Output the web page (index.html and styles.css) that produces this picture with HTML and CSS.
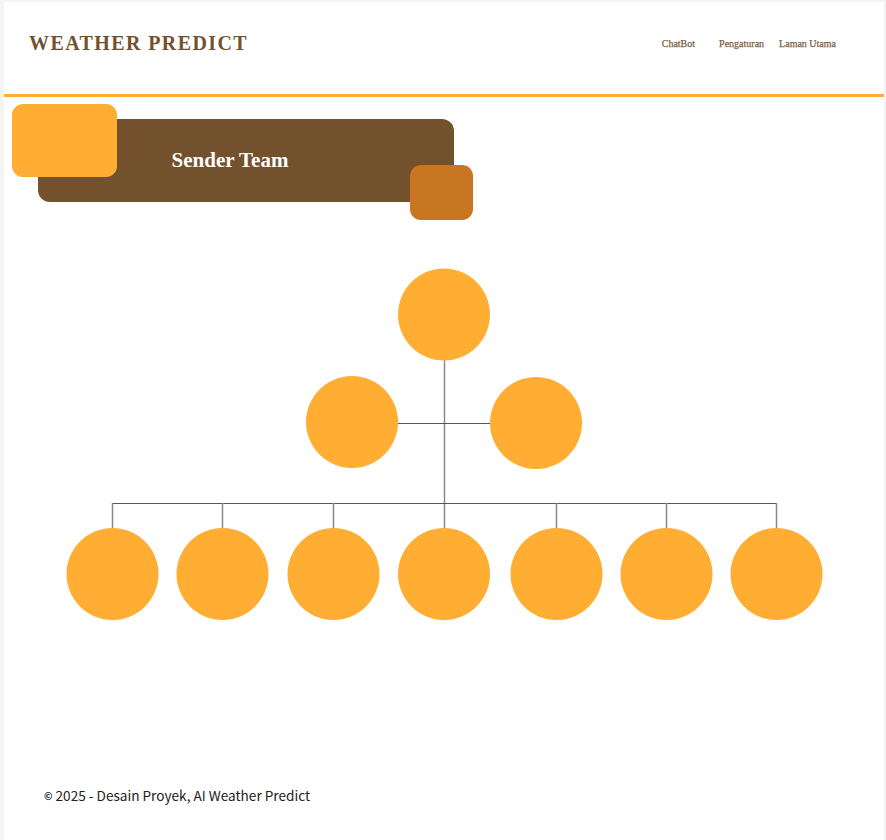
FILE: index.html
```html
<!DOCTYPE html>
<html lang="id">
<head>
<meta charset="utf-8">
<title>Weather Predict - Sender Team</title>
<link rel="stylesheet" href="styles.css">
</head>
<body>
<div class="page">
  <header class="header">
    <h1 class="brand">WEATHER PREDICT</h1>
    <nav class="nav">
      <a class="nav-link nav-first" href="#">ChatBot</a>
      <a class="nav-link" href="#">Pengaturan</a>
      <a class="nav-link" href="#">Laman Utama</a>
    </nav>
  </header>

  <section class="banner">
    <span class="deco deco-light"></span>
    <h2 class="banner-title">Sender Team</h2>
    <span class="deco deco-dark"></span>
  </section>

  <svg class="tree" width="880" height="380" viewBox="0 0 880 380" xmlns="http://www.w3.org/2000/svg">
    <g class="links">
      <line x1="440.5" y1="110" x2="440.5" y2="278" class="ln-v"/>
      <line x1="394" y1="173.5" x2="486" y2="173.5" class="ln-h"/>
      <line x1="108" y1="253.5" x2="773" y2="253.5" class="ln-h"/>
      <line x1="108.5" y1="253" x2="108.5" y2="278" class="ln-v"/>
      <line x1="218.5" y1="253" x2="218.5" y2="278" class="ln-v"/>
      <line x1="329.5" y1="253" x2="329.5" y2="278" class="ln-v"/>
      <line x1="552.5" y1="253" x2="552.5" y2="278" class="ln-v"/>
      <line x1="662.5" y1="253" x2="662.5" y2="278" class="ln-v"/>
      <line x1="772.5" y1="253" x2="772.5" y2="278" class="ln-v"/>
    </g>
    <g class="nodes">
      <circle cx="440" cy="64.5" r="46"/>
      <circle cx="348" cy="172" r="46"/>
      <circle cx="532" cy="173" r="46"/>
      <circle cx="108.5" cy="324" r="46"/>
      <circle cx="218.5" cy="324" r="46"/>
      <circle cx="329.5" cy="324" r="46"/>
      <circle cx="440" cy="324" r="46"/>
      <circle cx="552.5" cy="324" r="46"/>
      <circle cx="662.5" cy="324" r="46"/>
      <circle cx="772.5" cy="324" r="46"/>
    </g>
  </svg>

  <footer class="footer">
    <span class="copy">©</span> 2025 - Desain Proyek, AI Weather Predict
  </footer>
</div>
</body>
</html>
```

FILE: styles.css
```css
* { box-sizing: border-box; }

body {
  margin: 0;
  background: #f4f4f4;
}

.page {
  margin: 2px 2px 0 4px;
  background: #ffffff;
  min-height: 838px;
  overflow: hidden;
}

.header {
  height: 95px;
  display: flex;
  align-items: center;
  justify-content: space-between;
  padding: 0 48px 9px 25px;
  border-bottom: 3px solid #ffad33;
}

.brand {
  margin: 0;
  font-family: "Liberation Serif", "DejaVu Serif", serif;
  font-weight: 700;
  font-size: 20px;
  letter-spacing: 1.4px;
  color: #74512d;
}

.nav {
  display: flex;
  gap: 15px;
}

.nav-link {
  font-family: "Liberation Serif", "DejaVu Serif", serif;
  font-size: 10px;
  font-weight: 400;
  -webkit-text-stroke: 0.25px #7d5f47;
  color: #7d5f47;
  text-decoration: none;
}

.nav-first { margin-right: 9px; }

.banner {
  position: relative;
  margin: 22px 0 0 34px;
  width: 416px;
  height: 83px;
  background: #74512d;
  border-radius: 12px;
  display: flex;
  align-items: center;
  justify-content: center;
  padding-right: 32px;
}

.banner-title {
  margin: 0;
  font-family: "Liberation Serif", "DejaVu Serif", serif;
  font-weight: 700;
  font-size: 21px;
  color: #ffffff;
}

.deco {
  position: absolute;
  border-radius: 11px;
}

.deco-light {
  left: -26px;
  top: -15px;
  width: 105px;
  height: 73px;
  background: #ffad33;
}

.deco-dark {
  left: 372px;
  top: 46px;
  width: 63px;
  height: 55px;
  background: #c87621;
}

.tree {
  display: block;
  margin-top: 48px;
}

.nodes circle { fill: #ffad33; }

.ln-h { stroke: #555555; stroke-width: 1; }
.ln-v { stroke: #8a8a8a; stroke-width: 1.5; }

.footer {
  margin-top: 155px;
  padding-left: 40px;
  font-family: "Noto Sans CJK SC", "Noto Sans", sans-serif;
  font-size: 13.6px;
  color: #222222;
}

.copy {
  font-size: 10px;
  font-weight: 700;
  vertical-align: 1px;
}
```
